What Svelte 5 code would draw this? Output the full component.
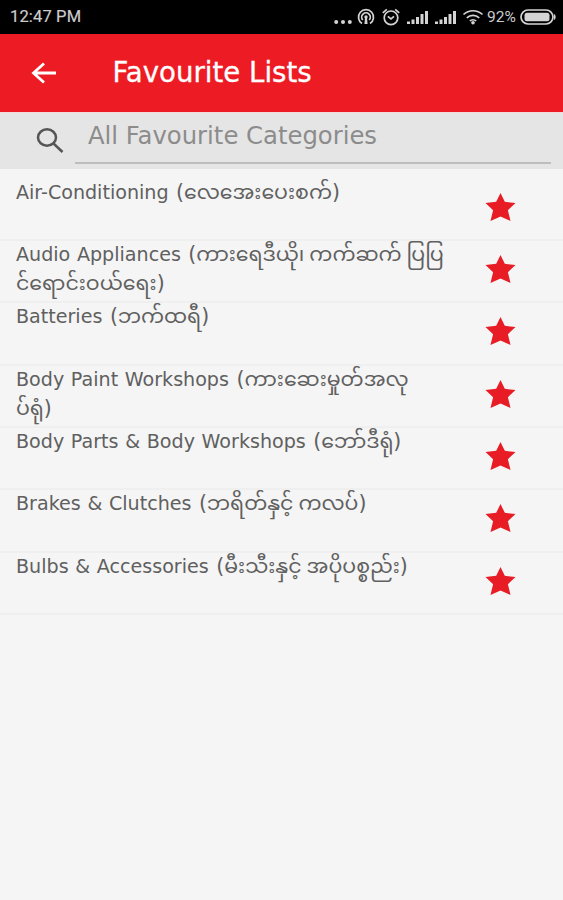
<script>
    const categories = [
        { name: 'Air-Conditioning', lines: ['လေအေးပေးစက်)'] },
        { name: 'Audio Appliances', lines: ['ကားရေဒီယို၊ ကက်ဆက် ပြပြ', 'င်ရောင်းဝယ်ရေး)'] },
        { name: 'Batteries', lines: ['ဘက်ထရီ)'] },
        { name: 'Body Paint Workshops', lines: ['ကားဆေးမှုတ်အလု', 'ပ်ရုံ)'] },
        { name: 'Body Parts & Body Workshops', lines: ['ဘော်ဒီရုံ)'] },
        { name: 'Brakes & Clutches', lines: ['ဘရိတ်နှင့် ကလပ်)'] },
        { name: 'Bulbs & Accessories', lines: ['မီးသီးနှင့် အပိုပစ္စည်း)'] }
    ];
</script>

{#snippet signal()}
    <svg class="signal" viewBox="0 0 21 14">
        <path d="M0 11.5h3V14H0zM4.5 9.500h3V14h-3zM9 7h3v7H9zM13.500 4h3v10h-3zM18 1h3v13h-3z" />
    </svg>
{/snippet}

<div class="screen">
    <div class="status">
        <span class="time">12:47 PM</span>
        <div class="tray">
            <svg class="dots" viewBox="0 0 18 4">
                <circle cx="2.200" cy="2" r="2" /><circle cx="9" cy="2" r="2" /><circle cx="15.800" cy="2" r="2" />
            </svg>
            <svg class="cast" viewBox="0 0 18 18">
                <path class="line" d="M5 15.500a7.500 7.500 0 1 1 8 0M5.800 12a4.300 4.300 0 1 1 6.400 0" />
                <circle cx="9" cy="9" r="1.700" />
                <path d="M8 10h2l.6 6H7.400z" />
            </svg>
            <svg class="alarm" viewBox="0 0 18 18">
                <circle class="line" cx="9" cy="9.800" r="6.800" />
                <path class="line" d="M.8 4.800l4-3.500M17.200 4.800l-4-3.500M5.800 8.300L9 10.800l3-2.500" />
            </svg>
            {@render signal()}
            {@render signal()}
            <svg class="wifi" viewBox="0 0 22 16">
                <path class="line" d="M1.500 5.500c5.400-5 13.600-5 19 0M4.800 8.900c3.500-3.300 8.900-3.300 12.400 0M7.800 12c1.800-1.700 4.600-1.700 6.400 0" />
                <circle cx="11" cy="13.800" r="1.800" />
            </svg>
            <span class="percent">92%</span>
            <svg class="battery" viewBox="0 0 36 16">
                <rect class="line" x="1" y="1" width="32" height="14" rx="7" />
                <rect x="4.500" y="3.800" width="25" height="8.400" rx="2.500" />
                <path d="M34 5c2.200 1 2.200 5 0 6z" />
            </svg>
        </div>
    </div>

    <header>
        <svg class="back" viewBox="0 0 26 22">
            <path d="M13 1.500L2.500 11l10.500 9.500M2.500 11H25" />
        </svg>
        <h1>Favourite Lists</h1>
    </header>

    <div class="search">
        <svg class="lens" viewBox="0 0 28 26">
            <ellipse cx="11" cy="9.500" rx="9" ry="8.200" />
            <path d="M17.500 15.500l9 8.500" />
        </svg>
        <div class="field">All Favourite Categories</div>
    </div>

    <ul>
        {#each categories as category}
            <li>
                <div class="label">
                    {#each category.lines as line, i}
                        <div class="line-text">{#if i === 0}<span class="name">{category.name}</span>({/if}{line}</div>
                    {/each}
                </div>
                <svg class="star" viewBox="0 0 30 28">
                    <path d="M15 0l4.300 8.800L30 10l-7.600 7.200L25 28l-10-4.600L5 28l2.600-10.800L0 10l10.700-1.200z" />
                </svg>
            </li>
        {/each}
    </ul>
</div>

<style>
    :global(body) {
        background: #f5f5f5;
    }
    .screen {
        height: 900px;
        overflow: hidden;
        background: #f5f5f5;
        font-family: "DejaVu Sans", "Noto Sans Myanmar", Padauk, sans-serif;
    }
    .status {
        height: 34px;
        box-sizing: border-box;
        padding: 0 7px 0 10px;
        background: #000;
        color: #ccc;
        display: flex;
        align-items: center;
        justify-content: space-between;
        font-family: Roboto, sans-serif;
        font-size: 16.5px;
    }
    .time {
        margin-bottom: 1px;
        letter-spacing: 0.15px;
        -webkit-text-stroke: 0.2px #ccc;
    }
    .tray {
        display: flex;
        align-items: center;
    }
    .tray svg {
        fill: #d4d4d4;
    }
    .tray .line {
        fill: none;
        stroke: #d4d4d4;
        stroke-width: 1.7;
    }
    .dots {
        width: 18px;
        height: 4px;
        margin: 9px 5px 0 0;
    }
    .cast {
        width: 18px;
        height: 18px;
        margin-right: 7px;
    }
    .alarm {
        width: 18px;
        height: 18px;
        margin-right: 7px;
    }
    .signal {
        width: 21px;
        height: 14px;
        margin-right: 6.5px;
    }
    .wifi {
        width: 22px;
        height: 16px;
        margin-right: 3px;
    }
    .percent {
        font-size: 15.5px;
        width: 30px;
        margin-right: 3px;
    }
    .battery {
        width: 36px;
        height: 16px;
    }
    header {
        height: 78px;
        background: #ed1c24;
        display: flex;
        align-items: center;
    }
    .back {
        width: 26px;
        height: 22px;
        margin: 0 0 0 30.5px;
        fill: none;
        stroke: #fff;
        stroke-width: 2.8;
    }
    h1 {
        margin: 0 0 2px 56px;
        color: #fff;
        font-size: 27.6px;
        font-weight: 400;
        white-space: nowrap;
        -webkit-text-stroke: 0.3px #fff;
    }
    .search {
        height: 57px;
        box-sizing: border-box;
        padding: 0 12px 5px 36px;
        background: #e5e5e5;
        border-top: 1px solid #f3d9da;
        display: flex;
        align-items: flex-end;
    }
    .lens {
        width: 28px;
        height: 26px;
        margin: 0 11px 10px 0;
        fill: none;
        stroke: #555;
        stroke-width: 2.5;
    }
    .field {
        flex: 1;
        height: 49px;
        box-sizing: border-box;
        padding: 4px 0 0 13px;
        border-bottom: 2px solid #bdbdbd;
        color: #8c8c8c;
        font-size: 24.3px;
        line-height: 33px;
        white-space: nowrap;
    }
    ul {
        margin: 0;
        padding: 9.6px 0 0;
        list-style: none;
    }
    li {
        height: 62.35px;
        box-sizing: border-box;
        padding: 0 47px 0 16px;
        border-bottom: 2px solid #efefef;
        display: flex;
        justify-content: space-between;
    }
    .label {
        color: #606060;
        font-size: 20.5px;
        word-spacing: -1.5px;
        white-space: nowrap;
    }
    .name {
        margin-right: 7.5px;
        font-size: 19.1px;
        word-spacing: 0.6px;
    }
    .line-text {
        height: 29.5px;
        line-height: 26.5px;
    }
    .star {
        width: 31px;
        height: 28px;
        margin-top: 14px;
        fill: #e81c24;
    }
</style>
